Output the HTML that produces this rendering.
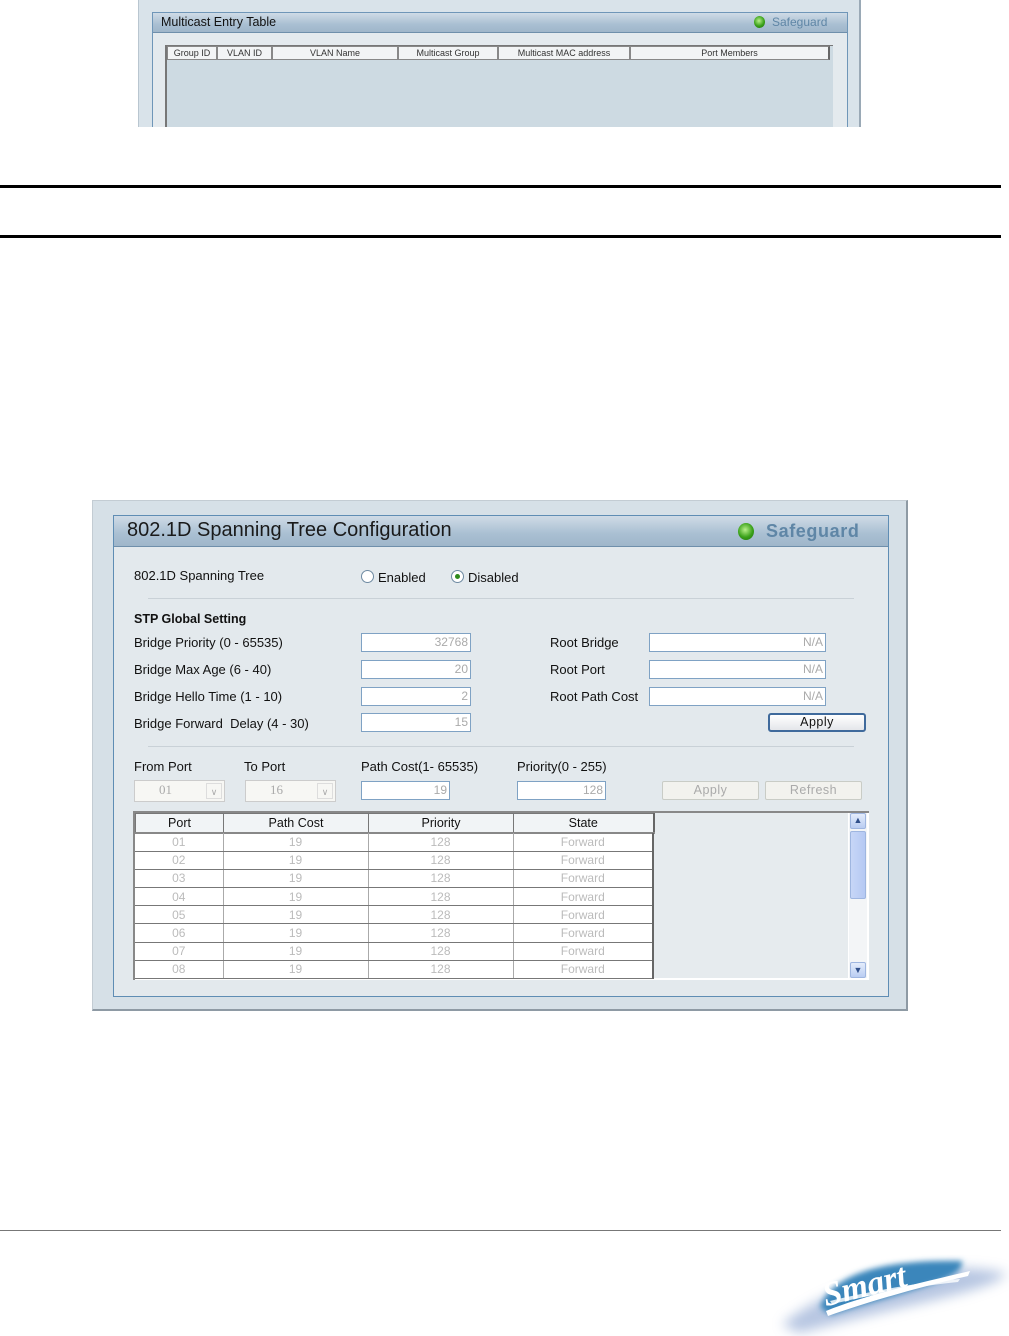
<!DOCTYPE html>
<html><head><meta charset="utf-8"><style>
*{margin:0;padding:0;box-sizing:border-box}
body{width:1009px;height:1336px;background:#fff;position:relative;overflow:hidden;font-family:"Liberation Sans",sans-serif;color:#111}
.a{position:absolute}
.hdr{background:linear-gradient(#cfdbe6,#a9bfd2 60%,#9fb6ca);border-bottom:1px solid #6f8fab}
.inp{position:absolute;background:#fff;border:1px solid #7fa2c4;font-size:12px;color:#aaa;text-align:right;padding-right:2px;line-height:17px;height:19px}
.lbl{position:absolute;font-size:13px;white-space:nowrap}
.btn{position:absolute;border:1px solid #c9ccc6;background:#f2f2ee;border-radius:2px;font-size:12.5px;color:#aaa;text-align:center;line-height:17px;height:19px;letter-spacing:.5px}
table{border-collapse:collapse}
.sg{position:absolute;border-radius:50%;background:radial-gradient(circle at 45% 40%,#b8f08a,#3aa11a 55%,#1d6e0a)}
</style></head><body>

<!-- top multicast panel -->
<div class="a" style="left:138px;top:0;width:723px;height:127px;background:#d9e3ea;border-left:1px solid #b9c6d0;border-right:2px solid #9aa9b6"></div>
<div class="a" style="left:152px;top:12px;width:696px;height:115px;background:#e4eaee;border:1px solid #6f96b8;border-bottom:none"></div>
<div class="a hdr" style="left:153px;top:13px;width:694px;height:20px"></div>
<div class="lbl" style="left:161px;top:15px;font-size:12.5px">Multicast Entry Table</div>
<div class="sg" style="left:754px;top:16px;width:11px;height:12px"></div>
<div class="lbl" style="left:772px;top:15px;font-size:12px;color:#5f86a6">Safeguard</div>
<div class="a" style="left:165px;top:45px;width:668px;height:82px;background:#cddae2;border-left:2px solid #777;border-top:1px solid #777"></div>
<div class="a" style="left:167px;top:46px;height:14px;display:flex;font-size:9px;color:#333">
<div style="width:50px;text-align:center;border:1px solid #888;background:#f2f4f5;line-height:12px">Group ID</div>
<div style="width:55px;text-align:center;border:1px solid #888;background:#f2f4f5;line-height:12px">VLAN ID</div>
<div style="width:126px;text-align:center;border:1px solid #888;background:#f2f4f5;line-height:12px">VLAN Name</div>
<div style="width:100px;text-align:center;border:1px solid #888;background:#f2f4f5;line-height:12px">Multicast Group</div>
<div style="width:132px;text-align:center;border:1px solid #888;background:#f2f4f5;line-height:12px">Multicast MAC address</div>
<div style="width:200px;text-align:center;border:1px solid #888;border-right:2px solid #666;background:#f2f4f5;line-height:12px">Port Members</div>
</div>

<div class="a" style="left:0;top:185px;width:1001px;height:3px;background:#000"></div>
<div class="a" style="left:0;top:235px;width:1001px;height:3px;background:#000"></div>

<!-- main panel -->
<div class="a" style="left:92px;top:500px;width:816px;height:511px;background:#d6e0e7;border:1px solid #c3ccd3;border-right:2px solid #8e9aa4;border-bottom:2px solid #8e9aa4"></div>
<div class="a" style="left:113px;top:515px;width:776px;height:482px;background:#e3e9ed;border:1px solid #5f8db4"></div>
<div class="a hdr" style="left:114px;top:516px;width:774px;height:31px"></div>
<div class="lbl" style="left:127px;top:519px;font-size:20px;color:#1a1a1a">802.1D Spanning Tree Configuration</div>
<div class="sg" style="left:738px;top:523px;width:16px;height:17px"></div>
<div class="lbl" style="left:766px;top:521px;font-size:18px;color:#5f86a6;font-weight:bold;letter-spacing:.6px">Safeguard</div>

<div class="lbl" style="left:134px;top:568px">802.1D Spanning Tree</div>
<div class="a" style="left:361px;top:570px;width:13px;height:13px;border:1px solid #6e8aa2;border-radius:50%;background:#fff"></div>
<div class="lbl" style="left:378px;top:570px">Enabled</div>
<div class="a" style="left:451px;top:570px;width:13px;height:13px;border:1px solid #6e8aa2;border-radius:50%;background:#fff"></div>
<div class="a" style="left:455px;top:574px;width:5px;height:5px;border-radius:50%;background:#2f8a1c"></div>
<div class="lbl" style="left:468px;top:570px">Disabled</div>
<div class="a" style="left:148px;top:598px;width:706px;height:1px;background:#c9d1d7"></div>

<div class="lbl" style="left:134px;top:612px;font-weight:bold;font-size:12.5px">STP Global Setting</div>
<div class="lbl" style="left:134px;top:635px">Bridge Priority (0 - 65535)</div>
<div class="lbl" style="left:134px;top:662px">Bridge Max Age (6 - 40)</div>
<div class="lbl" style="left:134px;top:689px">Bridge Hello Time (1 - 10)</div>
<div class="lbl" style="left:134px;top:716px">Bridge Forward&nbsp; Delay (4 - 30)</div>
<div class="inp" style="left:361px;top:633px;width:110px">32768</div>
<div class="inp" style="left:361px;top:660px;width:110px">20</div>
<div class="inp" style="left:361px;top:687px;width:110px">2</div>
<div class="inp" style="left:361px;top:713px;width:110px">15</div>
<div class="lbl" style="left:550px;top:635px">Root Bridge</div>
<div class="lbl" style="left:550px;top:662px">Root Port</div>
<div class="lbl" style="left:550px;top:689px">Root Path Cost</div>
<div class="inp" style="left:649px;top:633px;width:177px">N/A</div>
<div class="inp" style="left:649px;top:660px;width:177px">N/A</div>
<div class="inp" style="left:649px;top:687px;width:177px">N/A</div>
<div class="btn" style="left:768px;top:713px;width:98px;color:#111;border:2px solid #3f6a9c;background:linear-gradient(#fff,#e4e6ea);border-radius:3px;line-height:15px">Apply</div>
<div class="a" style="left:148px;top:746px;width:706px;height:1px;background:#c9d1d7"></div>

<div class="lbl" style="left:134px;top:759px">From Port</div>
<div class="lbl" style="left:244px;top:759px">To Port</div>
<div class="lbl" style="left:361px;top:759px">Path Cost(1- 65535)</div>
<div class="lbl" style="left:517px;top:759px">Priority(0 - 255)</div>
<div class="a" style="left:134px;top:780px;width:91px;height:22px;border:1px solid #ccc;background:#f7f7f4;font-family:'Liberation Serif',serif;font-size:13px;color:#aaa;padding:1px 0 0 24px">01<span style="position:absolute;right:2px;top:2px;width:16px;height:16px;border:1px solid #ddd;font-size:9px;text-align:center;line-height:16px">&#8744;</span></div>
<div class="a" style="left:245px;top:780px;width:91px;height:22px;border:1px solid #ccc;background:#f7f7f4;font-family:'Liberation Serif',serif;font-size:13px;color:#aaa;padding:1px 0 0 24px">16<span style="position:absolute;right:2px;top:2px;width:16px;height:16px;border:1px solid #ddd;font-size:9px;text-align:center;line-height:16px">&#8744;</span></div>
<div class="inp" style="left:361px;top:781px;width:89px">19</div>
<div class="inp" style="left:517px;top:781px;width:89px">128</div>
<div class="btn" style="left:662px;top:781px;width:97px">Apply</div>
<div class="btn" style="left:765px;top:781px;width:97px">Refresh</div>

<!-- table -->
<div class="a" style="left:133px;top:811px;width:736px;height:169px;background:#fff;border-top:2px solid #888;border-left:2px solid #888"></div>
<div class="a" style="left:653px;top:813px;width:195px;height:165px;background:#e6ebee"></div>
<table class="a" style="left:135px;top:813px;font-size:12.5px">
<tr style="height:19px;background:#f1f4f6"><td style="width:88px;border:1px solid #777;border-bottom:2px solid #888;text-align:center">Port</td><td style="width:145px;border:1px solid #777;border-bottom:2px solid #888;text-align:center">Path Cost</td><td style="width:145px;border:1px solid #777;border-bottom:2px solid #888;text-align:center">Priority</td><td style="width:140px;border:1px solid #777;border-right:2px solid #666;border-bottom:2px solid #888;text-align:center">State</td></tr>
</table>
<div class="a" style="left:135px;top:833px;font-size:12px;color:#bbb">
<table>
<tr style="height:18.2px"><td style="width:88px;text-align:center;border-right:1px solid #aaa;border-bottom:1px solid #777">01</td><td style="width:145px;text-align:center;border-right:1px solid #aaa;border-bottom:1px solid #777">19</td><td style="width:145px;text-align:center;border-right:1px solid #aaa;border-bottom:1px solid #777">128</td><td style="width:140px;text-align:center;border-right:2px solid #666;border-bottom:1px solid #777">Forward</td></tr>
<tr style="height:18.2px"><td style="text-align:center;border-right:1px solid #aaa;border-bottom:1px solid #777">02</td><td style="text-align:center;border-right:1px solid #aaa;border-bottom:1px solid #777">19</td><td style="text-align:center;border-right:1px solid #aaa;border-bottom:1px solid #777">128</td><td style="text-align:center;border-right:2px solid #666;border-bottom:1px solid #777">Forward</td></tr>
<tr style="height:18.2px"><td style="text-align:center;border-right:1px solid #aaa;border-bottom:1px solid #777">03</td><td style="text-align:center;border-right:1px solid #aaa;border-bottom:1px solid #777">19</td><td style="text-align:center;border-right:1px solid #aaa;border-bottom:1px solid #777">128</td><td style="text-align:center;border-right:2px solid #666;border-bottom:1px solid #777">Forward</td></tr>
<tr style="height:18.2px"><td style="text-align:center;border-right:1px solid #aaa;border-bottom:1px solid #777">04</td><td style="text-align:center;border-right:1px solid #aaa;border-bottom:1px solid #777">19</td><td style="text-align:center;border-right:1px solid #aaa;border-bottom:1px solid #777">128</td><td style="text-align:center;border-right:2px solid #666;border-bottom:1px solid #777">Forward</td></tr>
<tr style="height:18.2px"><td style="text-align:center;border-right:1px solid #aaa;border-bottom:1px solid #777">05</td><td style="text-align:center;border-right:1px solid #aaa;border-bottom:1px solid #777">19</td><td style="text-align:center;border-right:1px solid #aaa;border-bottom:1px solid #777">128</td><td style="text-align:center;border-right:2px solid #666;border-bottom:1px solid #777">Forward</td></tr>
<tr style="height:18.2px"><td style="text-align:center;border-right:1px solid #aaa;border-bottom:1px solid #777">06</td><td style="text-align:center;border-right:1px solid #aaa;border-bottom:1px solid #777">19</td><td style="text-align:center;border-right:1px solid #aaa;border-bottom:1px solid #777">128</td><td style="text-align:center;border-right:2px solid #666;border-bottom:1px solid #777">Forward</td></tr>
<tr style="height:18.2px"><td style="text-align:center;border-right:1px solid #aaa;border-bottom:1px solid #777">07</td><td style="text-align:center;border-right:1px solid #aaa;border-bottom:1px solid #777">19</td><td style="text-align:center;border-right:1px solid #aaa;border-bottom:1px solid #777">128</td><td style="text-align:center;border-right:2px solid #666;border-bottom:1px solid #777">Forward</td></tr>
<tr style="height:18.2px"><td style="text-align:center;border-right:1px solid #aaa;border-bottom:1px solid #777">08</td><td style="text-align:center;border-right:1px solid #aaa;border-bottom:1px solid #777">19</td><td style="text-align:center;border-right:1px solid #aaa;border-bottom:1px solid #777">128</td><td style="text-align:center;border-right:2px solid #666;border-bottom:1px solid #777">Forward</td></tr>
</table></div>
<!-- scrollbar -->
<div class="a" style="left:849px;top:813px;width:18px;height:165px;background:#f3f5f7"></div>
<div class="a" style="left:850px;top:813px;width:16px;height:16px;background:linear-gradient(#e4ecfb,#b9cdf2);border:1px solid #9fb6e0;border-radius:2px;font-size:9px;color:#304f8a;text-align:center;line-height:13px">&#9650;</div>
<div class="a" style="left:850px;top:831px;width:16px;height:68px;background:linear-gradient(90deg,#c7d6f7,#b5c9f3);border:1px solid #9fb6e0;border-radius:2px"></div>
<div class="a" style="left:850px;top:962px;width:16px;height:16px;background:linear-gradient(#e4ecfb,#b9cdf2);border:1px solid #9fb6e0;border-radius:2px;font-size:9px;color:#304f8a;text-align:center;line-height:14px">&#9660;</div>

<!-- footer -->
<div class="a" style="left:0;top:1230px;width:1001px;height:1px;background:#777"></div>
<svg class="a" style="left:770px;top:1245px" width="239" height="91" viewBox="0 0 239 91">
<defs>
<filter id="b" x="-30%" y="-60%" width="160%" height="220%"><feGaussianBlur stdDeviation="6"/></filter>
<filter id="c" x="-20%" y="-40%" width="140%" height="180%"><feGaussianBlur stdDeviation="3"/></filter>
</defs>
<path d="M12 80 C50 45 150 10 236 28 C230 45 130 60 30 88 Z" fill="#9fb3d8" opacity=".75" filter="url(#b)"/>
<path d="M50 62 C62 30 110 14 192 16 C195 34 150 42 60 70 Z" fill="#3b86bb" filter="url(#c)"/>
<path d="M56 66 C95 50 150 38 200 26 L198 31 C150 42 100 56 58 71 Z" fill="#fff"/>
<path d="M60 56 C110 44 160 36 190 34 L188 37 C150 41 110 48 62 59 Z" fill="#fff" opacity=".8"/>
<text x="52" y="50" font-family="Liberation Serif,serif" font-style="italic" font-weight="bold" font-size="34" fill="#fff" transform="rotate(-14 100 40)">Smart</text>
</svg>
</body></html>
